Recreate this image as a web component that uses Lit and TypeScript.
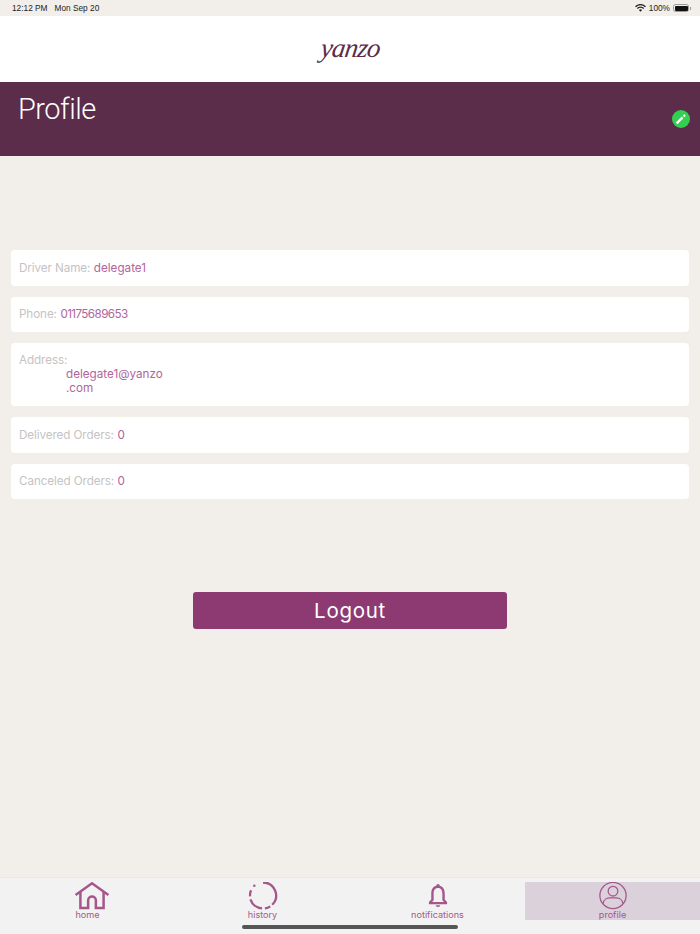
import { css, html, LitElement } from "lit";
import { customElement } from "lit/decorators.js";

const rows = [
  { label: "Driver Name:", value: "delegate1" },
  { label: "Phone:", value: "01175689653", narrow: true },
  { label: "Delivered Orders:", value: "0" },
  { label: "Canceled Orders:", value: "0" },
];

@customElement("app-root")
class AppRoot extends LitElement {
  renderRow(row: { label: string; value: string; narrow?: boolean }) {
    return html`<div class="row">
      <span class="label">${row.label}</span>
      <span class="value ${row.narrow ? "digits" : ""}">${row.value}</span>
    </div>`;
  }

  render() {
    return html`
      <div class="status">
        <span class="time">12:12 PM</span>
        <span class="time date">Mon Sep 20</span>
        <span class="status-right">
          <svg width="11" height="8" viewBox="0 0 12 9">
            <path d="M0.4 3 A8 8 0 0 1 11.6 3" fill="none" stroke="#222" stroke-width="1.5" />
            <path d="M2.4 5 A5 5 0 0 1 9.6 5" fill="none" stroke="#222" stroke-width="1.5" />
            <path d="M4.2 6.8 L6 8.8 L7.8 6.8 A2.6 2.6 0 0 0 4.2 6.8 Z" fill="#222" />
          </svg>
          <span class="time">100%</span>
          <span class="battery"><span class="battery-fill"></span></span>
          <span class="battery-cap"></span>
        </span>
      </div>
      <header class="brand"><span class="logo">yanzo</span></header>
      <div class="band">
        <h1>Profile</h1>
        <button class="edit" aria-label="edit">
          <svg width="12" height="12" viewBox="0 0 12 12" fill="none" stroke="#fff" stroke-width="2.2">
            <path d="M1.6 10.4 L7.6 4.4" />
            <path d="M8.6 3.4 L10 2" />
          </svg>
        </button>
      </div>
      <main>
        ${this.renderRow(rows[0])} ${this.renderRow(rows[1])}
        <div class="row address">
          <span class="label">Address:</span>
          <div class="value address-value">delegate1@yanzo<br />.com</div>
        </div>
        ${this.renderRow(rows[2])} ${this.renderRow(rows[3])}
        <button class="logout">Logout</button>
      </main>
      <nav>
        <div class="tab home">
          <svg width="36" height="29" viewBox="0 0 36 29" fill="none" stroke="#a5578c" stroke-width="2.6">
            <path d="M1 13.5 L18 1.4 L35 13.5" />
            <path d="M6 10 V27 H14 V19 A4 4 0 0 1 22 19 V27 H30 V10" />
          </svg>
          <span>home</span>
        </div>
        <div class="tab">
          <svg width="30" height="29" viewBox="0 1 30 29" fill="none" stroke="#a5578c" stroke-width="2.4">
            <path d="M15 1.5 A13.5 13.5 0 0 1 24.5 24.6" />
            <path d="M22.5 26.2 A13.5 13.5 0 0 1 17 28.4" />
            <path d="M14 28.4 A13.5 13.5 0 0 1 2 19" />
            <path d="M1.6 16 A13.5 13.5 0 0 1 2.6 9.5" />
            <circle cx="6" cy="5" r="1.3" fill="#a5578c" stroke="none" />
          </svg>
          <span>history</span>
        </div>
        <div class="tab">
          <svg width="30" height="29" viewBox="0 0 30 29" fill="#a5578c">
            <circle cx="15" cy="3.8" r="1.8" />
            <path fill-rule="evenodd" d="M15 3.6 C9.8 3.6 8 7.5 8 12 V18 L5.6 20.8 V23 H24.4 V20.8 L22 18 V12 C22 7.5 20.2 3.6 15 3.6 Z M15 6.2 C11.6 6.2 10.5 8.8 10.5 12 V18.8 L8.8 20.8 H21.2 L19.5 18.8 V12 C19.5 8.8 18.4 6.2 15 6.2 Z" />
            <path d="M12.6 24.2 H17.4 A2.4 1.8 0 0 1 12.6 24.2 Z" />
          </svg>
          <span>notifications</span>
        </div>
        <div class="tab active">
          <svg width="30" height="29" viewBox="0 1 30 29" fill="none" stroke="#a5578c" stroke-width="1.3">
            <circle cx="15" cy="15" r="13.6" />
            <circle cx="15" cy="10.5" r="5" />
            <path d="M4.8 23.5 C5 19 9 17.4 12 17.4 H18 C21 17.4 25 19 25.2 23.5" />
          </svg>
          <span>profile</span>
        </div>
      </nav>
      <div class="indicator"></div>
    `;
  }

  static styles = css`
    :host {
      display: block;
      position: relative;
      width: 700px;
      height: 934px;
      overflow: hidden;
      background: #f2efea;
      font-family: Inter, "Liberation Sans", sans-serif;
    }
    .status {
      height: 16px;
      display: flex;
      align-items: center;
      padding: 0 9px 0 12px;
    }
    .time {
      font-family: "Liberation Sans", sans-serif;
      font-size: 8.3px;
      color: #222;
    }
    .date {
      margin-left: 7px;
    }
    .status-right {
      margin-left: auto;
      display: flex;
      align-items: center;
      gap: 3px;
    }
    .battery {
      width: 13px;
      height: 5px;
      border: 1px solid #999;
      border-radius: 2.5px;
      padding: 0.5px;
      display: block;
    }
    .battery-fill {
      display: block;
      height: 100%;
      background: #111;
      border-radius: 1px;
    }
    .battery-cap {
      width: 1px;
      height: 3px;
      background: #999;
      margin-left: -2px;
    }
    .brand {
      height: 66px;
      background: #fff;
      display: flex;
      align-items: center;
      justify-content: center;
    }
    .logo {
      font-family: "Liberation Serif", serif;
      font-style: italic;
      font-size: 27px;
      color: #5c2c4b;
      transform: skewX(-8deg);
      margin-bottom: 2px;
      letter-spacing: -0.8px;
    }
    .band {
      height: 74px;
      background: #5c2c4b;
      display: flex;
      justify-content: space-between;
      padding: 0 10px 0 18px;
    }
    h1 {
      margin: 9px 0 0;
      font-family: Roboto, sans-serif;
      font-weight: 300;
      font-size: 29px;
      line-height: 36px;
      letter-spacing: -0.5px;
      color: #fff;
    }
    .edit {
      width: 18px;
      height: 18px;
      margin-top: 28px;
      padding: 0;
      border: 0;
      border-radius: 50%;
      background: #31d14f;
      display: flex;
      align-items: center;
      justify-content: center;
    }
    main {
      padding: 94px 11px 0;
      display: flex;
      flex-direction: column;
      gap: 11px;
    }
    .row {
      background: #fff;
      border-radius: 4px;
      height: 35.5px;
      box-sizing: border-box;
      padding: 0 8px;
      display: flex;
      align-items: center;
      gap: 3.5px;
      font-size: 11.7px;
    }
    .label {
      color: #c6c3c4;
      letter-spacing: -0.1px;
    }
    .value {
      color: #b0659b;
    }
    .digits {
      letter-spacing: -0.6px;
    }
    .address {
      height: 63px;
      display: block;
      padding-top: 11px;
      line-height: 13.5px;
    }
    .address-value {
      margin-left: 47px;
      margin-top: 0.5px;
    }
    .logout {
      align-self: center;
      width: 314.5px;
      height: 37px;
      margin-top: 82px;
      border: 0;
      border-radius: 3px;
      background: #8d3a72;
      color: #fff;
      font-family: inherit;
      font-size: 20.5px;
      letter-spacing: 0.7px;
    }
    nav {
      position: absolute;
      left: 0;
      right: 0;
      bottom: 0;
      height: 57px;
      box-sizing: border-box;
      padding-top: 4px;
      background: #f2f2f2;
      border-top: 1px solid #ece9e5;
      display: grid;
      grid-template-columns: repeat(4, 1fr);
    }
    .tab {
      height: 38px;
      display: flex;
      flex-direction: column;
      align-items: center;
      color: #a5578c;
      font-size: 9.1px;
      line-height: 10px;
    }
    .tab svg {
      display: block;
    }
    .tab.home svg {
      margin-left: 8px;
    }
    .tab.active {
      background: #dbd1da;
    }
    .indicator {
      position: absolute;
      left: 242px;
      bottom: 5px;
      width: 216px;
      height: 4px;
      border-radius: 2px;
      background: #555;
    }
  `;
}
